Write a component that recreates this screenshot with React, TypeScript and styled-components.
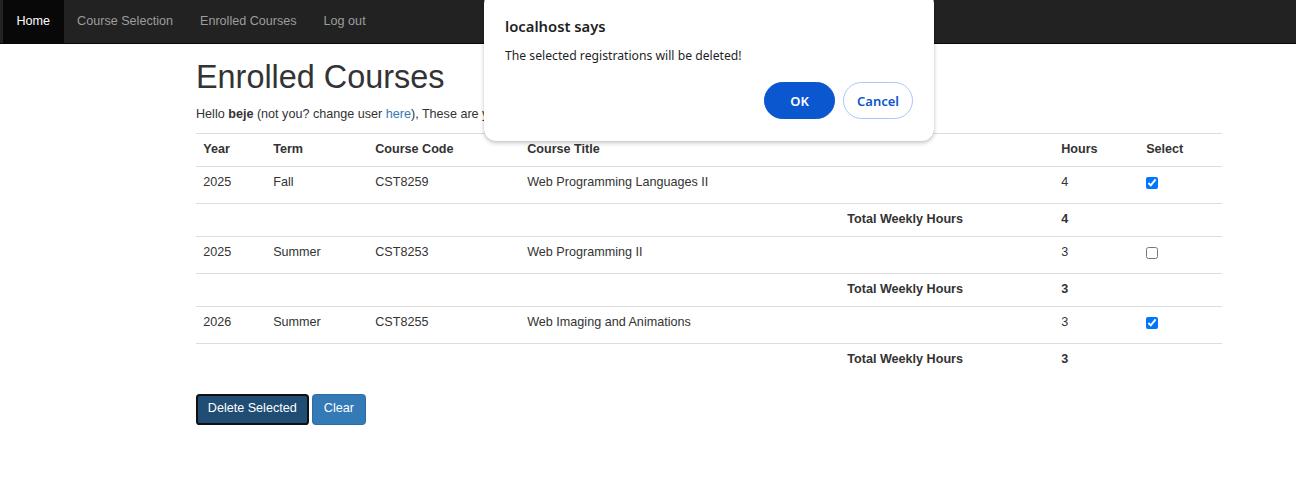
import { Fragment } from "react";
import styled, { createGlobalStyle } from "styled-components";

const GlobalStyle = createGlobalStyle`
  * { box-sizing: border-box; }
  html, body {
    margin: 0;
    padding: 0;
    background: #fff;
    font-family: "Liberation Sans", Arial, Helvetica, sans-serif;
    font-size: 12.6px;
    line-height: 18px;
    color: #333;
  }
`;

const Page = styled.div`
  position: relative;
  min-height: 501px;
`;

const NavBar = styled.nav`
  display: flex;
  height: 44px;
  padding-left: 3px;
  background: #222;
  border-bottom: 1px solid #080808;
`;

const NavLink = styled.a<{ $active?: boolean }>`
  display: flex;
  align-items: center;
  padding: 0 13.5px 2px;
  color: ${({ $active }) => ($active ? "#fff" : "#9d9d9d")};
  background: ${({ $active }) => ($active ? "#080808" : "transparent")};
  text-decoration: none;
  cursor: pointer;
`;

const Container = styled.main`
  padding-left: 196px;
  width: 1222px;
`;

const Title = styled.h1`
  margin: 16px 0 9px;
  font-size: 32.4px;
  line-height: 35.6px;
  font-weight: 500;
`;

const Intro = styled.p`
  margin: 0 0 10px;
`;

const Link = styled.a`
  color: #337ab7;
  text-decoration: none;
`;

const Table = styled.table`
  width: 1026px;
  border-collapse: collapse;
  table-layout: fixed;
  margin-bottom: 18px;
`;

const Row = styled.tr<{ $h: number }>`
  height: ${({ $h }) => $h}px;
  border-top: 1px solid #ddd;
`;

const Th = styled.th`
  text-align: left;
  font-weight: bold;
  padding: 6px 7.2px 0;
  vertical-align: top;
`;

const Td = styled.td<{ $right?: number; $bold?: boolean }>`
  padding: 6px 7.2px 0;
  padding-right: ${({ $right }) => ($right ? `${$right}px` : "7.2px")};
  vertical-align: top;
  text-align: ${({ $right }) => ($right ? "right" : "left")};
  font-weight: ${({ $bold }) => ($bold ? "bold" : "normal")};
`;

const Check = styled.input`
  width: 12px;
  height: 12px;
  margin: 4.5px 0 0 0;
  accent-color: #0075ff;
`;

const Actions = styled.div`
  display: flex;
  gap: 3.5px;
`;

const Button = styled.button<{ $focused?: boolean }>`
  height: 31px;
  padding: 0 ${({ $focused }) => ($focused ? "9.8px" : "10.8px")} 3px;
  font-family: inherit;
  font-size: 12.6px;
  line-height: 18px;
  color: #fff;
  background: ${({ $focused }) => ($focused ? "#204d74" : "#337ab7")};
  border: ${({ $focused }) => ($focused ? "2px solid #111" : "1px solid #2e6da4")};
  border-radius: 3.6px;
  cursor: pointer;
`;

const Dialog = styled.div`
  position: absolute;
  top: -8px;
  left: 484px;
  width: 450px;
  padding: 23px 21px 22px 21px;
  background: #fff;
  border-radius: 12px;
  box-shadow: 0 2px 4px rgba(0, 0, 0, 0.22), 0 0 1px rgba(0, 0, 0, 0.2);
  font-family: "Noto Sans", "Open Sans", sans-serif;
  color: #1f1f1f;
`;

const DialogTitle = styled.div`
  font-size: 14.8px;
  line-height: 22px;
  font-weight: 600;
`;

const DialogText = styled.div`
  margin-top: 9px;
  font-size: 12.2px;
  line-height: 20px;
`;

const DialogActions = styled.div`
  display: flex;
  justify-content: flex-end;
  gap: 8px;
  margin-top: 16px;
`;

const PillButton = styled.button<{ $primary?: boolean }>`
  height: 37px;
  width: ${({ $primary }) => ($primary ? "71px" : "70px")};
  border-radius: 19px;
  font-family: "Noto Sans", "Open Sans", sans-serif;
  font-size: 13px;
  font-weight: 600;
  color: ${({ $primary }) => ($primary ? "#fff" : "#0b57d0")};
  background: ${({ $primary }) => ($primary ? "#0b57d0" : "#fff")};
  border: 1px solid ${({ $primary }) => ($primary ? "#0b57d0" : "#a8c7fa")};
  cursor: pointer;
`;

type Course = {
  year: number;
  term: string;
  code: string;
  title: string;
  hours: number;
  selected: boolean;
};

const courses: Course[] = [
  { year: 2025, term: "Fall", code: "CST8259", title: "Web Programming Languages II", hours: 4, selected: true },
  { year: 2025, term: "Summer", code: "CST8253", title: "Web Programming II", hours: 3, selected: false },
  { year: 2026, term: "Summer", code: "CST8255", title: "Web Imaging and Animations", hours: 3, selected: true },
];

export default function App() {
  return (
    <Page>
      <GlobalStyle />
      <NavBar>
        <NavLink $active>Home</NavLink>
        <NavLink>Course Selection</NavLink>
        <NavLink>Enrolled Courses</NavLink>
        <NavLink>Log out</NavLink>
      </NavBar>

      <Container>
        <Title>Enrolled Courses</Title>
        <Intro>
          Hello <b>beje</b> (not you? change user <Link>here</Link>), These are your current registrations
        </Intro>

        <Table>
          <colgroup>
            <col style={{ width: 70 }} />
            <col style={{ width: 102 }} />
            <col style={{ width: 152 }} />
            <col style={{ width: 534 }} />
            <col style={{ width: 85 }} />
            <col style={{ width: 83 }} />
          </colgroup>
          <tbody>
            <Row $h={33}>
              <Th>Year</Th>
              <Th>Term</Th>
              <Th>Course Code</Th>
              <Th>Course Title</Th>
              <Th>Hours</Th>
              <Th>Select</Th>
            </Row>
            {courses.map((c) => (
              <Fragment key={c.code}>
                <Row $h={37}>
                  <Td>{c.year}</Td>
                  <Td>{c.term}</Td>
                  <Td>{c.code}</Td>
                  <Td>{c.title}</Td>
                  <Td>{c.hours}</Td>
                  <Td>
                    <Check type="checkbox" defaultChecked={c.selected} />
                  </Td>
                </Row>
                <Row $h={33}>
                  <Td />
                  <Td />
                  <Td />
                  <Td $right={91} $bold>
                    Total Weekly Hours
                  </Td>
                  <Td $bold>{c.hours}</Td>
                  <Td />
                </Row>
              </Fragment>
            ))}
          </tbody>
        </Table>

        <Actions>
          <Button $focused>Delete Selected</Button>
          <Button>Clear</Button>
        </Actions>
      </Container>

      <Dialog>
        <DialogTitle>localhost says</DialogTitle>
        <DialogText>The selected registrations will be deleted!</DialogText>
        <DialogActions>
          <PillButton $primary>OK</PillButton>
          <PillButton>Cancel</PillButton>
        </DialogActions>
      </Dialog>
    </Page>
  );
}
